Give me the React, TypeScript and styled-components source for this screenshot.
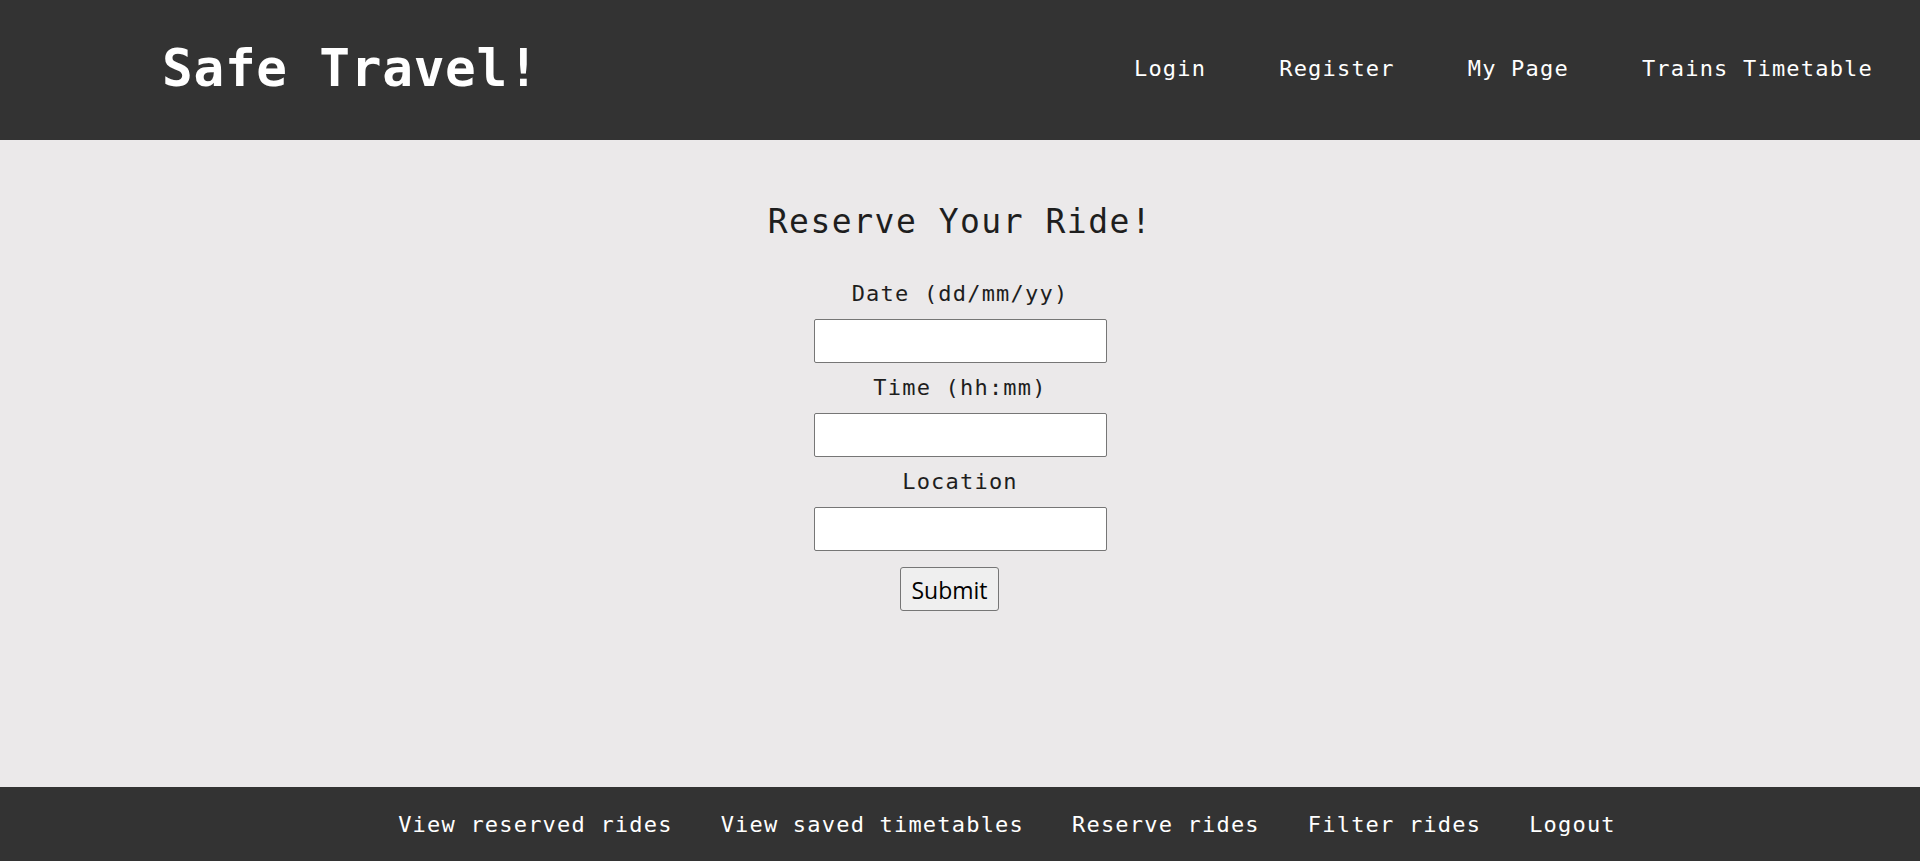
import React from "react";
import styled, { createGlobalStyle } from "styled-components";

const GlobalStyle = createGlobalStyle`
  html, body {
    margin: 0;
    padding: 0;
  }
  body {
    font-family: "DejaVu Sans Mono", "Liberation Mono", monospace;
    background: #ebe9ea;
  }
`;

const Page = styled.div`
  display: flex;
  flex-direction: column;
  height: 100vh;
  overflow: hidden;
`;

const Header = styled.header`
  display: flex;
  flex: none;
  align-items: center;
  justify-content: space-between;
  height: 140px;
  padding: 0 47px 0 162px;
  background: #333333;
  box-sizing: border-box;
`;

const Brand = styled.h1`
  margin: 0 0 4px 0;
  font-family: "DejaVu Sans Mono", monospace;
  font-weight: bold;
  font-size: 51px;
  letter-spacing: 0.75px;
  line-height: normal;
  color: #ffffff;
`;

const NavList = styled.nav`
  display: flex;
  align-items: center;
  gap: 73px;
  margin-bottom: 4px;
`;

const NavLink = styled.a`
  font-family: "DejaVu Sans Mono", monospace;
  font-size: 22px;
  letter-spacing: 1.2px;
  color: #ffffff;
  text-decoration: none;
  line-height: normal;
`;

const Main = styled.main`
  flex: 1;
  display: flex;
  flex-direction: column;
  align-items: center;
  background: #ebe9ea;
`;

const Title = styled.h2`
  margin: 62px 0 0 0;
  font-family: "DejaVu Sans Mono", monospace;
  font-weight: normal;
  font-size: 33px;
  letter-spacing: 1.5px;
  line-height: normal;
  color: #1e1e1e;
`;

const Form = styled.form`
  display: flex;
  flex-direction: column;
  align-items: center;
  margin-top: 28px;
`;

const Label = styled.label`
  display: block;
  font-family: "DejaVu Sans Mono", monospace;
  font-size: 22px;
  letter-spacing: 1.2px;
  line-height: 50px;
  color: #1e1e1e;
  text-align: center;
`;

const Field = styled.input`
  box-sizing: border-box;
  width: 293px;
  height: 44px;
  margin: 0;
  border: 1px solid #767676;
  border-radius: 2px;
  background: #ffffff;
  font-size: 18px;
  padding: 0 6px;
  outline: none;
`;

const SubmitButton = styled.button`
  box-sizing: border-box;
  margin: 16px 21px 0 0;
  width: 99px;
  height: 44px;
  padding: 3px 0 0 0;
  border: 1px solid #767676;
  border-radius: 3px;
  background: #efefef;
  color: #000000;
  font-family: "Open Sans", "Noto Sans", sans-serif;
  font-size: 23px;
  line-height: 1;
  cursor: pointer;
`;

const Footer = styled.footer`
  display: flex;
  flex: none;
  align-items: center;
  justify-content: center;
  gap: 48px;
  height: 74px;
  padding: 0 0 0 94px;
  box-sizing: border-box;
  background: #333333;
`;

const FooterLink = styled.a`
  font-family: "DejaVu Sans Mono", monospace;
  font-size: 22px;
  letter-spacing: 1.2px;
  color: #ffffff;
  text-decoration: none;
  line-height: normal;
  white-space: nowrap;
`;

const navItems = ["Login", "Register", "My Page", "Trains Timetable"];
const footerItems = [
  "View reserved rides",
  "View saved timetables",
  "Reserve rides",
  "Filter rides",
  "Logout",
];

const fields = [
  { id: "date", label: "Date (dd/mm/yy)" },
  { id: "time", label: "Time (hh:mm)" },
  { id: "location", label: "Location" },
];

export default function App() {
  return (
    <>
      <GlobalStyle />
      <Page>
        <Header>
          <Brand>Safe Travel!</Brand>
          <NavList>
            {navItems.map((item) => (
              <NavLink key={item} href="#">
                {item}
              </NavLink>
            ))}
          </NavList>
        </Header>
        <Main>
          <Title>Reserve Your Ride!</Title>
          <Form onSubmit={(e) => e.preventDefault()}>
            {fields.map((f) => (
              <React.Fragment key={f.id}>
                <Label htmlFor={f.id}>{f.label}</Label>
                <Field id={f.id} type="text" />
              </React.Fragment>
            ))}
            <SubmitButton type="submit">Submit</SubmitButton>
          </Form>
        </Main>
        <Footer>
          {footerItems.map((item) => (
            <FooterLink key={item} href="#">
              {item}
            </FooterLink>
          ))}
        </Footer>
      </Page>
    </>
  );
}
